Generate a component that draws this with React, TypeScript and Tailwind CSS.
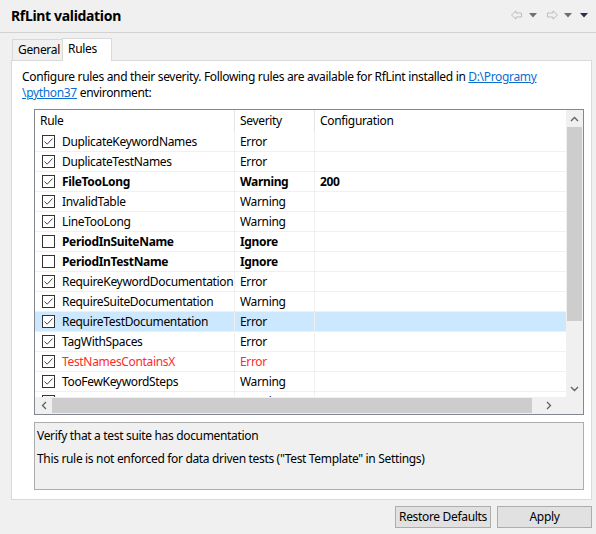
import React from 'react';

type Rule = {
  name: string;
  severity: string;
  config?: string;
  checked: boolean;
  bold?: boolean;
  red?: boolean;
  selected?: boolean;
};

const RULES: Rule[] = [
  { name: 'DuplicateKeywordNames', severity: 'Error', checked: true },
  { name: 'DuplicateTestNames', severity: 'Error', checked: true },
  { name: 'FileTooLong', severity: 'Warning', config: '200', checked: true, bold: true },
  { name: 'InvalidTable', severity: 'Warning', checked: true },
  { name: 'LineTooLong', severity: 'Warning', checked: true },
  { name: 'PeriodInSuiteName', severity: 'Ignore', checked: false, bold: true },
  { name: 'PeriodInTestName', severity: 'Ignore', checked: false, bold: true },
  { name: 'RequireKeywordDocumentation', severity: 'Error', checked: true },
  { name: 'RequireSuiteDocumentation', severity: 'Warning', checked: true },
  { name: 'RequireTestDocumentation', severity: 'Error', checked: true, selected: true },
  { name: 'TagWithSpaces', severity: 'Error', checked: true },
  { name: 'TestNamesContainsX', severity: 'Error', checked: true, red: true },
  { name: 'TooFewKeywordSteps', severity: 'Warning', checked: true },
  { name: 'TooFewTestSteps', severity: 'Warning', checked: true },
];

const Checkbox: React.FC<{ checked: boolean }> = ({ checked }) => (
  <div className="w-[13px] h-[13px] border border-[#333333] bg-white flex items-center justify-center shrink-0">
    {checked && (
      <svg width="11" height="11" viewBox="0 0 11 11">
        <path d="M1.5 5.5 L4.2 8.2 L9.5 2.5" fill="none" stroke="#444444" strokeWidth="1" />
      </svg>
    )}
  </div>
);

const NavArrow: React.FC<{ dir: 'left' | 'right' }> = ({ dir }) => (
  <svg width="11" height="10" viewBox="0 0 11 10" className={dir === 'right' ? '-scale-x-100' : ''}>
    <path d="M0.5 5 L5 0.8 L5 3 L10.5 3 L10.5 7 L5 7 L5 9.2 Z" fill="none" stroke="#bdbdbd" strokeWidth="1" />
  </svg>
);

const Caret: React.FC<{ color?: string }> = ({ color = '#6f6f6f' }) => (
  <svg width="8" height="5" viewBox="0 0 8 5">
    <path d="M0 0 L8 0 L4 4.5 Z" fill={color} />
  </svg>
);

export default function App() {
  return (
    <div
      className="w-[596px] h-[534px] bg-[#f0f0f0] flex flex-col text-[12px] tracking-[-0.33px] text-[#000000] overflow-hidden"
      style={{ fontFamily: '"Noto Sans", "Open Sans", sans-serif' }}
    >
      {/* HEADER */}
      <div className="h-[33px] shrink-0 border-b border-[#d2d2d2] flex items-center justify-between pl-[11px] pr-[8px]">
        <h1 className="text-[14px] font-bold leading-none pb-[1px]">RfLint validation</h1>
        <div className="flex items-center pb-[2px]">
          <NavArrow dir="left" />
          <span className="ml-[7px]"><Caret /></span>
          <span className="ml-[10px] flex"><NavArrow dir="right" /></span>
          <span className="ml-[6px]"><Caret /></span>
          <span className="ml-[8px]"><Caret color="#3b2652" /></span>
        </div>
      </div>

      <div className="flex-1 flex flex-col pl-[11px] pr-[4px] pt-[5px]">
        {/* TABS */}
        <div className="flex items-end h-[22px] pl-[1px] relative z-10">
          <div className="h-[21px] w-[50px] pl-[5px] border border-b-0 border-r-0 border-[#d9d9d9] bg-[#f0f0f0] flex items-center leading-none">
            General
          </div>
          <div className="h-[23px] w-[50px] pl-[5px] border border-b-0 border-[#d9d9d9] bg-white flex items-start pt-[4px] leading-none -mb-[1px]">
            Rules
          </div>
        </div>

        {/* PANEL */}
        <div className="h-[440px] bg-white border border-[#d9d9d9] flex flex-col pl-[10px] pr-[7px] pt-[8px]">
          <p className="leading-[16px]">
            Configure rules and their severity. Following rules are available for RfLint installed in{' '}
            <span className="text-[#0a6ed1] underline">D:\Programy \python37</span> environment:
          </p>

          {/* TABLE */}
          <div className="mt-[8px] ml-[12px] h-[306px] border border-[#828790] flex flex-col">
            <div className="flex flex-1 min-h-0">
              <div className="flex-1 flex flex-col min-w-0">
                <div className="h-[22px] shrink-0 flex bg-white">
                  <div className="w-[200px] pl-[5px] flex items-center border-r border-[#e5e5e5]">Rule</div>
                  <div className="w-[80px] pl-[5px] flex items-center border-r border-[#e5e5e5]">Severity</div>
                  <div className="flex-1 pl-[5px] flex items-center">Configuration</div>
                </div>
                <div className="flex-1 overflow-hidden">
                  {RULES.map((r) => (
                    <div
                      key={r.name}
                      className={`h-[20px] flex border-b border-[#f0f0f0] ${r.selected ? 'bg-[#cce8ff]' : 'bg-white'} ${
                        r.bold ? 'font-bold' : ''
                      } ${r.red ? 'text-[#ff2a2a]' : ''}`}
                    >
                      <div className="w-[200px] flex items-center pl-[7px] gap-[7px] border-r border-[#f0f0f0]">
                        <Checkbox checked={r.checked} />
                        <span className="whitespace-nowrap">{r.name}</span>
                      </div>
                      <div className="w-[80px] flex items-center pl-[5px] border-r border-[#f0f0f0]">{r.severity}</div>
                      <div className="flex-1 flex items-center pl-[5px]">{r.config}</div>
                    </div>
                  ))}
                </div>
              </div>
              {/* vertical scrollbar */}
              <div className="w-[17px] bg-[#f0f0f0] flex flex-col shrink-0">
                <div className="h-[17px] flex items-center justify-center">
                  <svg width="9" height="6" viewBox="0 0 9 6">
                    <path d="M1 5 L4.5 1.5 L8 5" fill="none" stroke="#606060" strokeWidth="1.3" />
                  </svg>
                </div>
                <div className="h-[194px] mx-[1px] bg-[#cdcdcd]" />
                <div className="flex-1" />
                <div className="h-[17px] flex items-center justify-center">
                  <svg width="9" height="6" viewBox="0 0 9 6">
                    <path d="M1 1 L4.5 4.5 L8 1" fill="none" stroke="#606060" strokeWidth="1.3" />
                  </svg>
                </div>
              </div>
            </div>
            {/* horizontal scrollbar */}
            <div className="h-[17px] shrink-0 flex bg-[#f0f0f0]">
              <div className="w-[17px] flex items-center justify-center">
                <svg width="6" height="9" viewBox="0 0 6 9">
                  <path d="M5 1 L1.5 4.5 L5 8" fill="none" stroke="#606060" strokeWidth="1.3" />
                </svg>
              </div>
              <div className="w-[480px] my-[1px] bg-[#cdcdcd]" />
              <div className="flex-1 flex items-center justify-center">
                <svg width="6" height="9" viewBox="0 0 6 9">
                  <path d="M1 1 L4.5 4.5 L1 8" fill="none" stroke="#606060" strokeWidth="1.3" />
                </svg>
              </div>
              <div className="w-[17px] bg-[#f0f0f0]" />
            </div>
          </div>

          {/* DESCRIPTION */}
          <div className="mt-[7px] ml-[12px] h-[68px] bg-[#f0f0f0] border border-[#adadad] px-[2px] pt-[5px] leading-[16px]">
            <p>Verify that a test suite has documentation</p>
            <p className="mt-[7px]">This rule is not enforced for data driven tests ("Test Template" in Settings)</p>
          </div>
        </div>

        {/* BUTTONS */}
        <div className="flex justify-end gap-[6px] mt-[6px]">
          <button className="w-[96px] h-[22px] bg-[#e1e1e1] border border-[#adadad] leading-none">Restore Defaults</button>
          <button className="w-[95px] h-[22px] bg-[#e1e1e1] border border-[#adadad] leading-none">Apply</button>
        </div>
      </div>
    </div>
  );
}
